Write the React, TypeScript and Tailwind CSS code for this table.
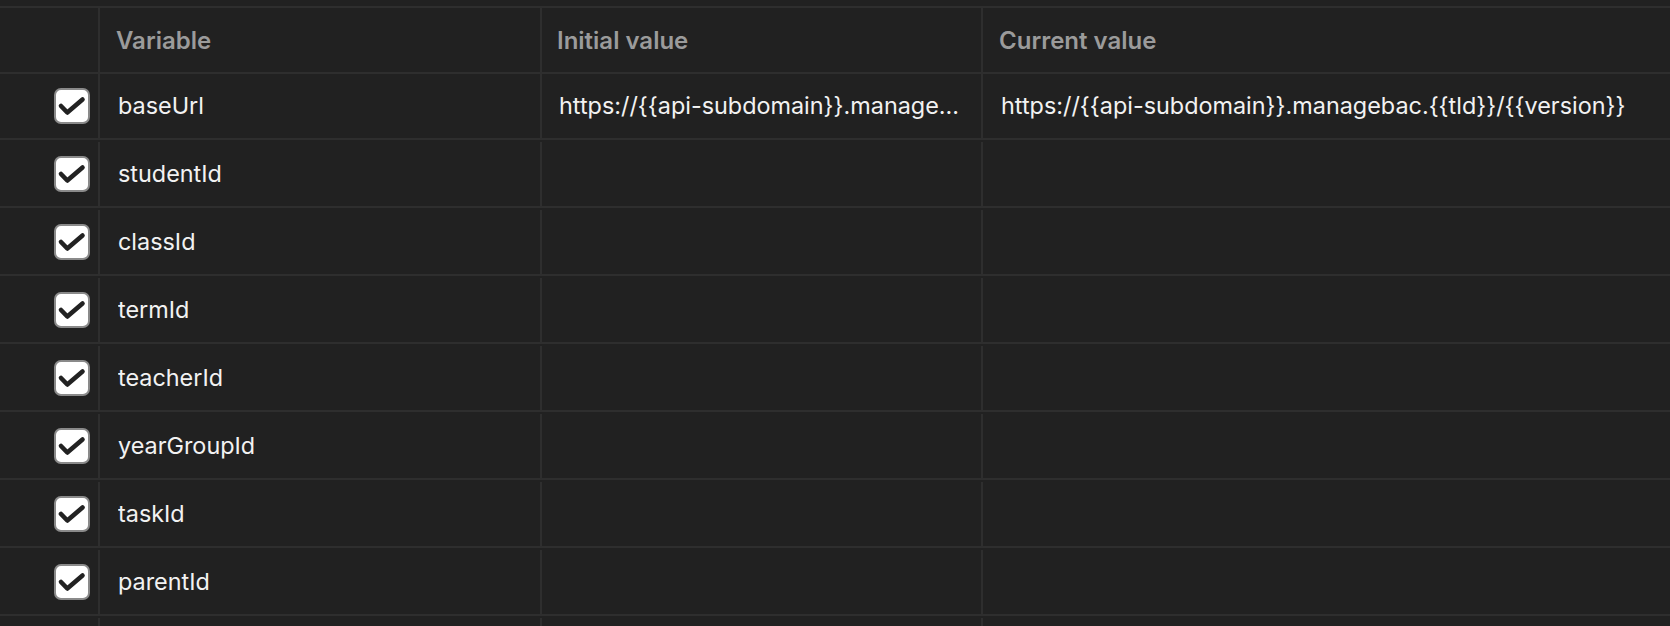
import React from "react";

const rows = [
  { name: "baseUrl", initial: "https://{{api-subdomain}}.managebac.{{tld}}/{{version}}", current: "https://{{api-subdomain}}.managebac.{{tld}}/{{version}}", check: true },
  { name: "studentId", initial: "", current: "", check: true },
  { name: "classId", initial: "", current: "", check: true },
  { name: "termId", initial: "", current: "", check: true },
  { name: "teacherId", initial: "", current: "", check: true },
  { name: "yearGroupId", initial: "", current: "", check: true },
  { name: "taskId", initial: "", current: "", check: true },
  { name: "parentId", initial: "", current: "", check: true },
  { name: "", initial: "", current: "", check: false },
];

function Check() {
  return (
    <div className="w-[36px] h-[36px] rounded-[7px] border-2 border-[#8a8a8a] bg-white flex items-center justify-center">
      <svg width="32" height="32" viewBox="0 0 32 32">
        <path d="M5 16 L11.3 22.5 L26.5 9.5" fill="none" stroke="#222" strokeWidth="4.6" strokeLinecap="round" strokeLinejoin="round" />
      </svg>
    </div>
  );
}

export default function App() {
  return (
    <div
      className="w-[1670px] h-[626px] overflow-hidden bg-[#212121] pt-[6px]"
      style={{ fontFamily: "Inter, 'Noto Sans', sans-serif" }}
    >
      <div className="border-t-2 border-b-2 border-[#2e2e2e] flex h-[68px]">
        <div className="w-[100px] border-r-2 border-[#2e2e2e]" />
        <div className="w-[442px] border-r-2 border-[#2e2e2e] flex items-center pl-[16px] pt-[2px] text-[24px] font-semibold text-[#9b9b9b]">Variable</div>
        <div className="w-[441px] border-r-2 border-[#2e2e2e] flex items-center pl-[15px] pt-[2px] text-[24px] font-semibold text-[#9b9b9b]">Initial value</div>
        <div className="flex-1 flex items-center pl-[16px] pt-[2px] text-[24px] font-semibold text-[#9b9b9b]">Current value</div>
      </div>
      {rows.map((r, i) => (
        <div key={i} className={`border-b-2 border-[#2e2e2e] ${i === 0 ? "" : "pt-[2px]"}`}>
          <div className="flex h-[64px]">
            <div className="w-[100px] border-r-2 border-[#2e2e2e] flex items-center justify-end pr-[8px]">
              {r.check && <Check />}
            </div>
            <div className="w-[442px] border-r-2 border-[#2e2e2e] flex items-center pl-[18px] pr-[16px] text-[23.4px] text-[#f2f2f2] min-w-0">
              <span className="truncate">{r.name}</span>
            </div>
            <div className="w-[441px] border-r-2 border-[#2e2e2e] flex items-center pl-[17px] pr-[16px] text-[23.4px] text-[#f2f2f2] min-w-0">
              <span className="truncate">{r.initial}</span>
            </div>
            <div className="flex-1 flex items-center pl-[18px] pr-[16px] text-[23.4px] text-[#f2f2f2] min-w-0">
              <span className="truncate">{r.current}</span>
            </div>
          </div>
        </div>
      ))}
    </div>
  );
}
